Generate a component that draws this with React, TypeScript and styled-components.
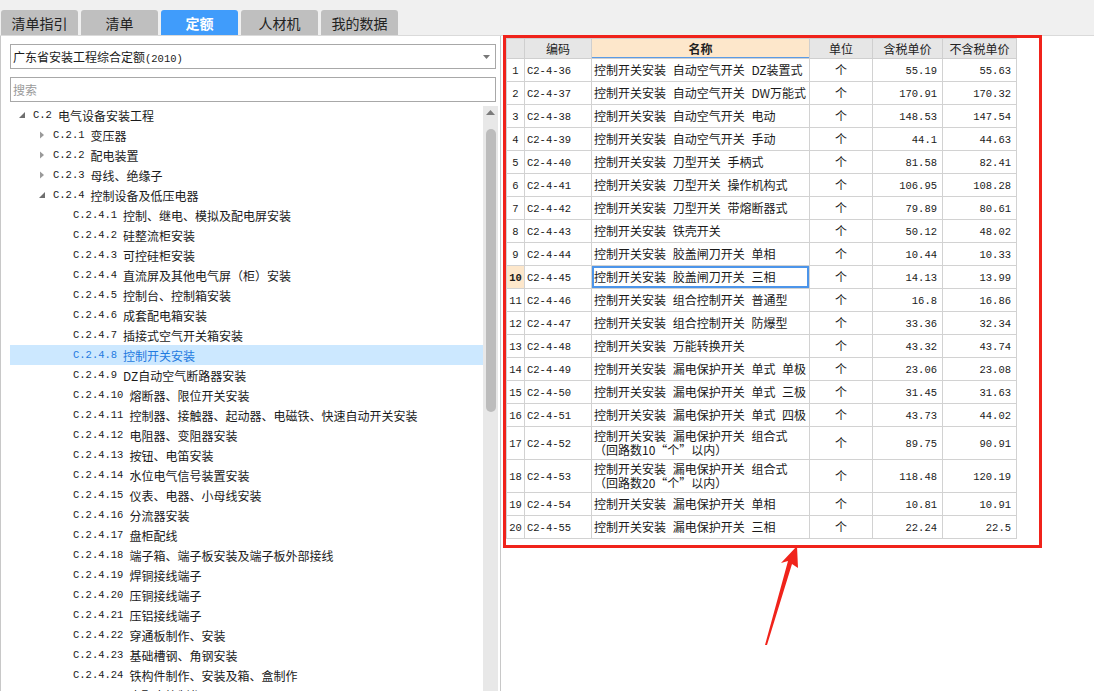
import React from 'react'
import styled, { createGlobalStyle } from 'styled-components'

const GlobalStyle = createGlobalStyle`
  html, body {
    margin: 0;
    padding: 0;
  }
  body {
    width: 1094px;
    height: 691px;
    overflow: hidden;
    background: #ffffff;
    font-family: "Noto Sans CJK SC", "Liberation Sans", sans-serif;
    font-size: 12px;
    color: #1a1a1a;
  }
`

const Page = styled.div`
  position: relative;
  width: 1094px;
  height: 691px;
  display: flex;
  flex-direction: column;
`
const TabBar = styled.div`
  height: 35px;
  box-sizing: border-box;
  padding: 10px 0 0 1px;
  display: flex;
  gap: 3px;
  background: #f0f0f0;
`
const Tab = styled.div<{ $active?: boolean }>`
  width: 77px;
  height: 25px;
  border-radius: 3px 3px 0 0;
  display: flex;
  align-items: center;
  justify-content: center;
  font-size: 14px;
  background: ${(p) => (p.$active ? '#409cfb' : '#bfbfbf')};
  color: ${(p) => (p.$active ? '#ffffff' : '#222222')};
  font-weight: ${(p) => (p.$active ? 'bold' : 'normal')};
`
const Body = styled.div`
  flex: 1;
  min-height: 0;
  display: flex;
  border-top: 1px solid #dadada;
`
const LeftPanel = styled.div`
  width: 501px;
  box-sizing: border-box;
  border-left: 1px solid #c8c8c8;
  border-right: 1px solid #c8c8c8;
  padding: 8px 2px 0 9px;
  display: flex;
  flex-direction: column;
  background: #fff;
`
const InputBox = styled.div<{ $gap?: number }>`
  height: 25px;
  box-sizing: border-box;
  margin: ${(p) => p.$gap || 0}px 2px 0 0;
  border: 1px solid #a8a8a8;
  display: flex;
  align-items: center;
  justify-content: space-between;
  padding: 0 5px 0 2px;
  font-size: 12px;
`
const Placeholder = styled.span`
  color: #9a9a9a;
`
const TreeArea = styled.div`
  flex: 1;
  min-height: 0;
  margin-top: 3px;
  display: flex;
  overflow: hidden;
`
const Tree = styled.div`
  flex: 1;
  display: flex;
  flex-direction: column;
`
const TreeRow = styled.div<{ $level: number; $selected?: boolean }>`
  height: 20px;
  flex-shrink: 0;
  display: flex;
  align-items: center;
  padding-left: ${(p) => 6 + p.$level * 20}px;
  white-space: nowrap;
  background: ${(p) => (p.$selected ? '#cce8ff' : 'transparent')};
  color: ${(p) => (p.$selected ? '#1f7ae0' : '#1a1a1a')};
`
const Caret = styled.span`
  width: 12px;
  height: 12px;
  margin-right: 5px;
  display: flex;
  align-items: center;
  justify-content: center;
  flex-shrink: 0;
`
const Mono = styled.span`
  font-family: "Liberation Mono", "DejaVu Sans Mono", monospace;
  font-size: 10.5px;
`
const NodeName = styled.span`
  margin-left: 6px;
`
const Scrollbar = styled.div`
  width: 15px;
  background: #e8e8e8;
  display: flex;
  flex-direction: column;
  align-items: center;
  padding-top: 4px;
  margin-top: 1px;
`
const Thumb = styled.div`
  width: 10px;
  height: 283px;
  margin-top: 14px;
  border-radius: 5px;
  background: #bcbcbc;
`
const RightPanel = styled.div`
  flex: 1;
  background: #fff;
  padding: 0 0 0 2px;
  display: flex;
  align-items: flex-start;
`
const RedBox = styled.div`
  margin-top: -1px;
  border: 3px solid #f0231b;
  padding: 0 22px 6px 0;
`
const Table = styled.table`
  border-collapse: collapse;
  table-layout: fixed;
  width: 510px;
  font-size: 12px;
  line-height: 14px;
  word-spacing: 4px;
`
const Th = styled.th<{ $current?: boolean }>`
  height: 19px;
  padding: 0;
  border: 1px solid #cfcfcf;
  font-weight: ${(p) => (p.$current ? 'bold' : 'normal')};
  background: ${(p) => (p.$current ? '#fde7cb' : '#e6e6e6')};
  box-shadow: ${(p) => (p.$current ? 'inset 0 -1px 0 #5a9be6' : 'none')};
  color: #222;
`
const Td = styled.td<{ $align?: string; $tall?: boolean; $index?: boolean; $current?: boolean; $focus?: boolean }>`
  height: ${(p) => (p.$tall ? 32 : 22)}px;
  padding: 0 ${(p) => (p.$align === 'right' ? 5 : 2)}px 0 ${(p) => (p.$align === 'right' ? 0 : 2)}px;
  border: 1px solid #d2d2d2;
  text-align: ${(p) => p.$align || 'left'};
  white-space: pre-line;
  background: ${(p) => (p.$current ? '#fde7cb' : '#fff')};
  font-weight: ${(p) => (p.$current ? 'bold' : 'normal')};
  box-shadow: ${(p) => (p.$focus ? 'inset 0 0 0 2px #4c95ea' : 'none')};
  color: #1a1a1a;
  overflow: hidden;
`
const Arrow = styled.svg`
  position: absolute;
  left: 760px;
  top: 540px;
`

const tabs = ['清单指引', '清单', '定额', '人材机', '我的数据']

type Node = { code: string; name: string; level: number; open?: boolean; leaf?: boolean; selected?: boolean }

const nodes: Node[] = [
  { code: 'C.2', name: '电气设备安装工程', level: 0, open: true },
  { code: 'C.2.1', name: '变压器', level: 1 },
  { code: 'C.2.2', name: '配电装置', level: 1 },
  { code: 'C.2.3', name: '母线、绝缘子', level: 1 },
  { code: 'C.2.4', name: '控制设备及低压电器', level: 1, open: true },
  ...[
    '控制、继电、模拟及配电屏安装',
    '硅整流柜安装',
    '可控硅柜安装',
    '直流屏及其他电气屏（柜）安装',
    '控制台、控制箱安装',
    '成套配电箱安装',
    '插接式空气开关箱安装',
    '控制开关安装',
    'DZ自动空气断路器安装',
    '熔断器、限位开关安装',
    '控制器、接触器、起动器、电磁铁、快速自动开关安装',
    '电阻器、变阻器安装',
    '按钮、电笛安装',
    '水位电气信号装置安装',
    '仪表、电器、小母线安装',
    '分流器安装',
    '盘柜配线',
    '端子箱、端子板安装及端子板外部接线',
    '焊铜接线端子',
    '压铜接线端子',
    '压铝接线端子',
    '穿通板制作、安装',
    '基础槽钢、角钢安装',
    '铁构件制作、安装及箱、盒制作',
    '木配电箱制作',
  ].map((name, i) => ({ code: `C.2.4.${i + 1}`, name, level: 2, leaf: true, selected: i === 7 })),
]

const rows: [string, string, string, string][] = [
  ['C2-4-36', '控制开关安装 自动空气开关 DZ装置式', '55.19', '55.63'],
  ['C2-4-37', '控制开关安装 自动空气开关 DW万能式', '170.91', '170.32'],
  ['C2-4-38', '控制开关安装 自动空气开关 电动', '148.53', '147.54'],
  ['C2-4-39', '控制开关安装 自动空气开关 手动', '44.1', '44.63'],
  ['C2-4-40', '控制开关安装 刀型开关 手柄式', '81.58', '82.41'],
  ['C2-4-41', '控制开关安装 刀型开关 操作机构式', '106.95', '108.28'],
  ['C2-4-42', '控制开关安装 刀型开关 带熔断器式', '79.89', '80.61'],
  ['C2-4-43', '控制开关安装 铁壳开关', '50.12', '48.02'],
  ['C2-4-44', '控制开关安装 胶盖闸刀开关 单相', '10.44', '10.33'],
  ['C2-4-45', '控制开关安装 胶盖闸刀开关 三相', '14.13', '13.99'],
  ['C2-4-46', '控制开关安装 组合控制开关 普通型', '16.8', '16.86'],
  ['C2-4-47', '控制开关安装 组合控制开关 防爆型', '33.36', '32.34'],
  ['C2-4-48', '控制开关安装 万能转换开关', '43.32', '43.74'],
  ['C2-4-49', '控制开关安装 漏电保护开关 单式 单极', '23.06', '23.08'],
  ['C2-4-50', '控制开关安装 漏电保护开关 单式 三极', '31.45', '31.63'],
  ['C2-4-51', '控制开关安装 漏电保护开关 单式 四极', '43.73', '44.02'],
  ['C2-4-52', '控制开关安装 漏电保护开关 组合式\n（回路数10“个”以内）', '89.75', '90.91'],
  ['C2-4-53', '控制开关安装 漏电保护开关 组合式\n（回路数20“个”以内）', '118.48', '120.19'],
  ['C2-4-54', '控制开关安装 漏电保护开关 单相', '10.81', '10.91'],
  ['C2-4-55', '控制开关安装 漏电保护开关 三相', '22.24', '22.5'],
]

function CaretIcon({ open }: { open?: boolean }) {
  return open ? (
    <svg width="8" height="8" viewBox="0 0 8 8">
      <polygon points="7,1 7,7 1,7" fill="#6f6f6f" />
    </svg>
  ) : (
    <svg width="8" height="8" viewBox="0 0 8 8">
      <polygon points="2,0.5 6,4 2,7.5" fill="#9a9a9a" />
    </svg>
  )
}

export default function App() {
  return (
    <Page>
      <GlobalStyle />
      <TabBar>
        {tabs.map((t) => (
          <Tab key={t} $active={t === '定额'}>
            {t}
          </Tab>
        ))}
      </TabBar>
      <Body>
        <LeftPanel>
          <InputBox>
            <span>
              广东省安装工程综合定额<Mono>(2010)</Mono>
            </span>
            <svg width="7" height="4" viewBox="0 0 7 4">
              <polygon points="0,0 7,0 3.5,4" fill="#777" />
            </svg>
          </InputBox>
          <InputBox $gap={8}>
            <Placeholder>搜索</Placeholder>
          </InputBox>
          <TreeArea>
            <Tree>
              {nodes.map((n) => (
                <TreeRow key={n.code} $level={n.level} $selected={n.selected}>
                  <Caret>{!n.leaf && <CaretIcon open={n.open} />}</Caret>
                  <Mono>{n.code}</Mono>
                  <NodeName>{n.name}</NodeName>
                </TreeRow>
              ))}
            </Tree>
            <Scrollbar>
              <svg width="9" height="5" viewBox="0 0 9 5">
                <polygon points="0,5 9,5 4.5,0" fill="#7c7c7c" />
              </svg>
              <Thumb />
            </Scrollbar>
          </TreeArea>
        </LeftPanel>
        <RightPanel>
          <RedBox>
            <Table>
              <colgroup>
                <col style={{ width: 18 }} />
                <col style={{ width: 67 }} />
                <col style={{ width: 218 }} />
                <col style={{ width: 63 }} />
                <col style={{ width: 70 }} />
                <col style={{ width: 74 }} />
              </colgroup>
              <thead>
                <tr>
                  <Th />
                  <Th>编码</Th>
                  <Th $current>名称</Th>
                  <Th>单位</Th>
                  <Th>含税单价</Th>
                  <Th>不含税单价</Th>
                </tr>
              </thead>
              <tbody>
                {rows.map(([code, name, tax, noTax], i) => {
                  const tall = name.includes('\n')
                  const current = i === 9
                  return (
                    <tr key={code}>
                      <Td $align="center" $tall={tall} $current={current}>
                        <Mono>{i + 1}</Mono>
                      </Td>
                      <Td $tall={tall}>
                        <Mono>{code}</Mono>
                      </Td>
                      <Td $tall={tall} $focus={current}>
                        {name}
                      </Td>
                      <Td $align="center" $tall={tall}>
                        个
                      </Td>
                      <Td $align="right" $tall={tall}>
                        <Mono>{tax}</Mono>
                      </Td>
                      <Td $align="right" $tall={tall}>
                        <Mono>{noTax}</Mono>
                      </Td>
                    </tr>
                  )
                })}
              </tbody>
            </Table>
          </RedBox>
        </RightPanel>
      </Body>
      <Arrow width="45" height="110" viewBox="0 0 45 110">
        <polygon points="37,6 21,23 28,21 5,105 7,105 32,24 38,28" fill="#f0231b" />
      </Arrow>
    </Page>
  )
}
